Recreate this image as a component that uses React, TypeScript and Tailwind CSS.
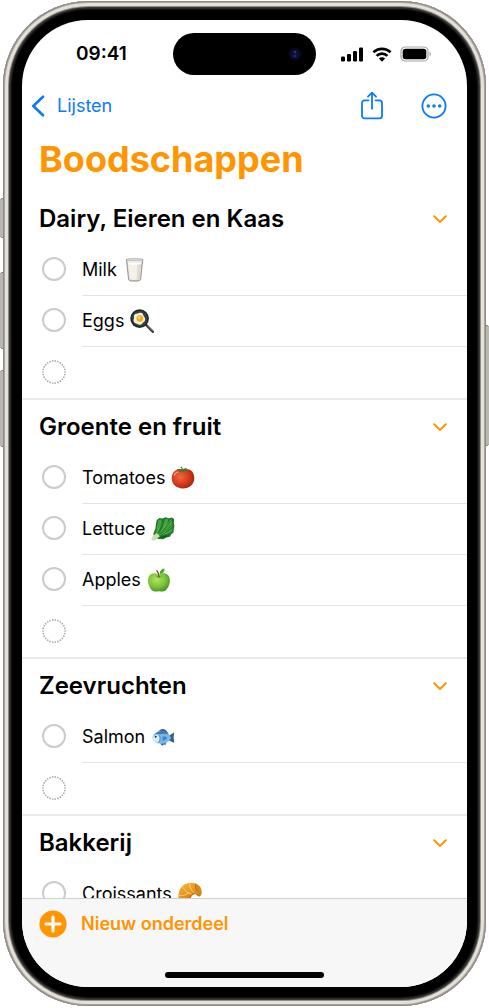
import { useState } from 'react'
import type { ReactNode } from 'react'

interface Item {
    name: string
    icon: ReactNode
}

interface Section {
    title: string
    items: Item[]
}

function MilkIcon() {
    return (
        <svg viewBox="0 0 24 24" className="size-6" aria-hidden="true">
            <path d="M3.4 1.2h16.4l-2.2 20.6c-.1.9-1.6 1.5-6 1.5s-5.9-.6-6-1.5z" fill="#c9cac9" />
            <path d="M4.4 2h14.4l-.4 4H4.8z" fill="#eceeee" />
            <path d="M4.9 5.6h13.4l-1.6 15.2c-.1.7-1.5 1.1-5.1 1.1s-5-.4-5.1-1.1z" fill="#f4f1e9" />
            <path d="M14.5 6h3.7l-1.5 14.8c-.1.5-1 .9-3 1z" fill="#dedbd2" />
            <ellipse cx="11.6" cy="5.8" rx="6.6" ry="1" fill="#fffdf6" />
            <path d="M3.4 1.4l2.2 20.2c.2 1 1.9 1.5 6 1.5s5.8-.5 6-1.5l2.2-20.2" fill="none" stroke="#85878a" strokeWidth=".8" />
            <ellipse cx="11.6" cy="1.5" rx="8.2" ry=".9" fill="#e2e4e5" stroke="#999b9d" strokeWidth=".6" />
        </svg>
    )
}

function EggsIcon() {
    return (
        <svg viewBox="0 0 24 24" className="size-6" aria-hidden="true">
            <path d="M16.3 16.2l6.5 6.5" stroke="#3a3a3c" strokeWidth="2.6" strokeLinecap="round" />
            <path d="M17.6 16.8l5 5" stroke="#8b8b8d" strokeWidth=".8" strokeLinecap="round" />
            <circle cx="9.6" cy="9.6" r="9.3" fill="#1d2421" />
            <circle cx="9.6" cy="9.6" r="7.9" fill="#37423c" />
            <path d="M4.2 6.1c1.4-1.7 3-1 4.8-2 2-1 3.7 0 4.2 1.8.4 1.5 2 2.2 2 4.4 0 2.4-1.9 2.8-2.9 4.1-1.2 1.5-3.4 1.6-5 .5-1.5-1-3.4-.9-3.7-3-.2-1.7.8-2.500.4-3.700-.2-.8-.2-1.600.2-2.100z" fill="#f2efe4" />
            <circle cx="9.8" cy="9.5" r="3.3" fill="#f7a712" />
            <circle cx="9.2" cy="8.7" r="1.6" fill="#ffd24b" />
        </svg>
    )
}

function TomatoIcon() {
    return (
        <svg viewBox="0 0 24 24" className="size-6" aria-hidden="true">
            <defs>
                <radialGradient id="tomato" cx=".38" cy=".4" r=".65">
                    <stop offset="0" stopColor="#f06a3f" />
                    <stop offset=".55" stopColor="#d83d1e" />
                    <stop offset="1" stopColor="#a82410" />
                </radialGradient>
            </defs>
            <path d="M11.7 3.400c6.700-1.400 11.600 1.900 11.600 8.600 0 6.300-4.600 10.400-11.400 10.400C5.200 22.400.7 18.300.7 12.300.7 5.600 5.500 2.500 11.700 3.400z" fill="url(#tomato)" />
            <path d="M3.300 9.300c.8-2.100 2.300-3.200 4.300-3.500" stroke="#f9a58a" strokeWidth="1.1" fill="none" strokeLinecap="round" />
            <path d="M11.3 3.8L9.400.9l.9-.3 1.800 2.400c1.500-.8 3-.9 4.300-.5l-2.200 1.300c1.500.2 2.700.7 3.600 1.600-1.700.2-3.200-.1-4.600-.7l.7 2.400c-1.300-.4-2-1.100-2.400-2.100-1.400 1-3 1.300-4.700.9 1-.4 1.700-1 2.300-1.600-1.400.1-2.600-.2-3.700-.9 2.300-.6 4.100-.5 5.900.4z" fill="#3d7b22" />
        </svg>
    )
}

function LettuceIcon() {
    return (
        <svg viewBox="0 0 24 24" className="size-6" aria-hidden="true">
            <path d="M5.800 2.900L8.500.9l3 .5L14.600.3l3 1 3.500-.8 2 1.500-.2 4 .5 3-.6 3.300-.3 3.200-2.400 2-1.200 2.200-3.500.8-3.100 1.800-5.600-.3-3.600-1.700-.7-3.600 2.100-5.800.4-3.800z" fill="#207a2b" />
            <path d="M7.500 3l2.400-.8 1 3-1.600 5.200-3.900 6 .3-5.100zM14 2l3.600.3-2.200 6-5.900 8 2.800-8.200zM21 3.500l.3 4-4.800 4.200-6 5 5.600-7.400zM21.700 11l-.9 3.900-4.300 1.800-6 1.700 5.700-3.700z" fill="#45a342" />
            <path d="M20.500 2.300l-8 9.200-7.700 8.700M8.400 10.900l-3.900 8M21.700 9.100l-8.700 6.500-7.500 4" stroke="#8bcf71" strokeWidth=".55" fill="none" />
            <path d="M18.600 18.200l-5.100 2.300-6.200.1 4.200-1.500z" fill="#10571e" />
            <path d="M5.300 15.900L2.100 19 .3 21.700l1.500 1.900 2.900-.5 4-3.500-1.400-2z" fill="#c9dfa2" />
            <circle cx="1.900" cy="22.100" r="1.300" fill="#e0d9b4" />
        </svg>
    )
}

function AppleIcon() {
    return (
        <svg viewBox="0 0 24 24" className="size-6" aria-hidden="true">
            <defs>
                <radialGradient id="apple" cx=".4" cy=".35" r=".7">
                    <stop offset="0" stopColor="#b4e45f" />
                    <stop offset=".6" stopColor="#78c137" />
                    <stop offset="1" stopColor="#438f1e" />
                </radialGradient>
            </defs>
            <path d="M11.900 6.700c2-1.200 4-1.600 6-1.200 3.200.6 5 3.300 5 6.900 0 4-2.200 8.400-4.800 10.400-2 1.400-3.900.3-6.200.4-2.200 0-4.200 1.100-6.200-.4-2.600-2-4.700-6.600-4.700-10.400 0-3.600 1.800-6.300 5-6.900 2-.4 4 0 5.900 1.200z" fill="url(#apple)" />
            <path d="M8.300 7.600c2.500 1 4.800 1 7.200.1-1 1.500-2.200 2-3.600 2s-2.600-.5-3.600-2.100z" fill="#559f27" opacity=".65" />
            <path d="M11.900 8.700c0-2.500-.6-4.400-2-6.100" stroke="#5f432f" strokeWidth="1.200" fill="none" strokeLinecap="round" />
            <path d="M12.600 5.900c0-3.200 1.800-5.200 4.800-5.500.4 3.200-1.300 5.200-4.800 5.500z" fill="#4fa429" />
        </svg>
    )
}

function FishIcon() {
    return (
        <svg viewBox="0 0 24 24" className="size-6" aria-hidden="true">
            <path d="M8 5.800c2-2 4.300-2.200 6.600-.9l3 3.600zM9 18.400l2.400 2.400 1.500-1.600 1.400 1 .9-3z" fill="#355f8d" />
            <path d="M16.800 11.200c2.200-.7 3.800-2.600 6-3.700.5 2-.1 3.700-.2 5.100.1 1.700.8 3.500.5 5.200-2.600-.8-4.300-2.200-6.300-2.700z" fill="#315f96" />
            <path d="M1.200 12.800C3 8.200 7.300 5.500 11.500 5.900c3.700.3 6.200 3.200 8.700 7-2.800 3.900-5.700 6-10.300 5.900-4.200-.1-7.400-2.300-8.700-6z" fill="#75b9e9" />
            <path d="M4.400 8.800c3.700-3.700 9.300-4.200 13.700.9-4.900-2.100-9-.1-13.700-.9z" fill="#3f77af" />
            <path d="M1.200 12.800C2.400 11 4.900 9.300 7 9.900c2.700 2.500 1.600 5.700-.4 7.500-2.500-.7-4.300-2-5.400-4.600z" fill="#deedf5" />
            <path d="M11 11.800c2.300-.8 4.400-.2 5 .9-.9 1.900-2.500 3-4.700 3 .8-1.500.8-2.600-.3-3.900z" fill="#4285c0" />
            <path d="M8 10c1.700 2.500 1.400 5-.3 7.300" stroke="#4587bc" strokeWidth=".7" fill="none" />
            <circle cx="4.700" cy="11.700" r="1" fill="#222e39" />
        </svg>
    )
}

function CroissantIcon() {
    return (
        <svg viewBox="0 0 24 24" className="size-6" aria-hidden="true">
            <defs>
                <linearGradient id="croissant" x1="0" y1="0" x2=".5" y2="1">
                    <stop offset="0" stopColor="#f5b637" />
                    <stop offset=".6" stopColor="#e39420" />
                    <stop offset="1" stopColor="#b96c13" />
                </linearGradient>
            </defs>
            <path d="M1.200 20.600C-.4 14.200.2 7.800 5 3.600 9.800-.3 17.700-.1 21.500 4.200c2.700 3.100 3 7.400.7 10-1.700.9-3.300-.9-4.600-2.300-2.400.2-4.100 1.700-4.800 4.100-1.700 5-8.100 7.300-11.600 4.600z" fill="url(#croissant)" />
            <path d="M17.600 1.700c2.900.9 4.800 3 5.500 5.500l-2.500 3c-2.500-2.200-3.400-5-3-8.500z" fill="#d88a1d" />
            <path d="M.9 13.600c4.300.6 7.700-.9 10-3.500M4.700 5.300c2.300 3.600 4.900 5.700 8.800 7M11.500 1.300c.1 3.900 1.500 7.300 4.800 9.700" stroke="#fbd678" strokeWidth=".9" fill="none" />
            <path d="M17.500 1.900c-.5 3.200.5 5.900 2.900 8.300M1.300 20.300c4.800 1.400 9.200-.8 10.800-5.300.8-2.200 2.500-3.400 4.900-3.600" stroke="#a25f14" strokeWidth=".7" fill="none" />
        </svg>
    )
}

const SECTIONS: Section[] = [
    {
        title: 'Dairy, Eieren en Kaas',
        items: [
            { name: 'Milk', icon: <MilkIcon /> },
            { name: 'Eggs', icon: <EggsIcon /> },
        ],
    },
    {
        title: 'Groente en fruit',
        items: [
            { name: 'Tomatoes', icon: <TomatoIcon /> },
            { name: 'Lettuce', icon: <LettuceIcon /> },
            { name: 'Apples', icon: <AppleIcon /> },
        ],
    },
    {
        title: 'Zeevruchten',
        items: [{ name: 'Salmon', icon: <FishIcon /> }],
    },
    {
        title: 'Bakkerij',
        items: [{ name: 'Croissants', icon: <CroissantIcon /> }],
    },
]

function StatusBar() {
    return (
        <div className="grid grid-cols-[1fr_143px_1fr] items-center pt-[13px]">
            <time className="pl-2 text-center text-[19px] leading-6 font-semibold">09:41</time>
            <div className="flex h-[42px] items-center justify-end rounded-full bg-black pr-[14px]">
                <svg viewBox="0 0 14 14" className="size-[14px]" aria-hidden="true">
                    <circle cx="7" cy="7" r="6.5" fill="#0a0a18" />
                    <circle cx="7" cy="7" r="4.5" fill="#0d0f2c" />
                    <circle cx="7" cy="5" r="1.3" fill="#25357a" />
                    <circle cx="7" cy="9" r="1.5" fill="#1d2383" />
                </svg>
            </div>
            <div className="flex items-center justify-center gap-2 pr-3">
                <svg viewBox="0 0 24 15" className="h-[15px] w-6" aria-hidden="true">
                    <rect x="1" y="9.5" width="4" height="5" rx="1.2" />
                    <rect x="7" y="7" width="4" height="7.5" rx="1.2" />
                    <rect x="13" y="4" width="4" height="10.5" rx="1.2" />
                    <rect x="19" y=".5" width="4" height="14" rx="1.2" />
                </svg>
                <svg viewBox="0 0 20 15" className="h-[15px] w-5" aria-hidden="true">
                    <path d="M1.400 5.300a12.300 12.300 0 0 1 17.200 0" stroke="#000" strokeWidth="2.7" fill="none" />
                    <path d="M4.600 8.900a7.700 7.700 0 0 1 10.800 0" stroke="#000" strokeWidth="2.7" fill="none" />
                    <path d="M10 14.700l-3.100-3.100a4.400 4.400 0 0 1 6.200 0z" />
                </svg>
                <svg viewBox="0 0 32 16" className="h-4 w-8" aria-hidden="true">
                    <rect x="1" y="1" width="27" height="14" rx="4.3" fill="none" stroke="#a6a6a6" strokeWidth="1.2" />
                    <rect x="2.7" y="2.7" width="23.6" height="10.6" rx="2.8" />
                    <path d="M29.500 5.600c1.900.7 1.900 4.100 0 4.800z" fill="#a6a6a6" />
                </svg>
            </div>
        </div>
    )
}

function NavBar() {
    return (
        <nav className="flex items-center justify-between pt-4 pr-5 pl-[9px] text-[#0a7aff]">
            <a href="#lijsten" className="flex items-center gap-3 text-[18px] leading-6">
                <svg viewBox="0 0 14 22" className="h-[22px] w-[14px]" fill="none" stroke="currentColor" strokeWidth="2.6" strokeLinecap="round" strokeLinejoin="round" aria-hidden="true">
                    <path d="M12 1.700L2.300 11l9.700 9.300" />
                </svg>
                Lijsten
            </a>
            <div className="flex items-center gap-[37px]">
                <button type="button" aria-label="Deel">
                    <svg viewBox="0 0 24 30" className="h-[30px] w-6" fill="none" stroke="currentColor" strokeWidth="1.8" strokeLinecap="round" strokeLinejoin="round" aria-hidden="true">
                        <path d="M8.500 9.300H4.600a2.600 2.600 0 0 0-2.600 2.600v12.800a2.600 2.600 0 0 0 2.600 2.600h14.800a2.600 2.600 0 0 0 2.600-2.600V11.900a2.600 2.600 0 0 0-2.600-2.600h-3.900" />
                        <path d="M12 17.800V1.900M8 5.700l4-4 4 4" />
                    </svg>
                </button>
                <button type="button" aria-label="Meer">
                    <svg viewBox="0 0 26 26" className="size-[26px]" fill="currentColor" aria-hidden="true">
                        <circle cx="13" cy="13" r="11.6" fill="none" stroke="currentColor" strokeWidth="1.8" />
                        <circle cx="7.3" cy="13" r="1.8" />
                        <circle cx="13" cy="13" r="1.8" />
                        <circle cx="18.7" cy="13" r="1.8" />
                    </svg>
                </button>
            </div>
        </nav>
    )
}

function ItemRow({ item }: { item: Item }) {
    return (
        <li className="flex h-[51px] pl-5">
            <label className="flex flex-1 items-center gap-4">
                <input
                    type="checkbox"
                    className="mb-1 size-6 shrink-0 appearance-none rounded-full border-2 border-[#cbcbcd] checked:bg-[#ff9500]"
                />
                <span className="flex h-full flex-1 items-center gap-1.5 border-b border-[#e4e4e6] pb-px text-[18px] leading-6">
                    {item.name}
                    {item.icon}
                </span>
            </label>
        </li>
    )
}

function ListSection({ section }: { section: Section }) {
    const [open, setOpen] = useState(true)

    return (
        <section className="border-b-2 border-[#ebebed]">
            <h2 className="flex h-[53px] items-center justify-between pr-5 pl-[17px] text-[24px] leading-7 font-semibold">
                {section.title}
                <button
                    type="button"
                    aria-label={`${section.title} in- of uitklappen`}
                    aria-expanded={open}
                    onClick={() => setOpen(!open)}
                    className="text-[#ff9500]"
                >
                    <svg viewBox="0 0 14 10" className="h-[10px] w-[14px]" fill="none" stroke="currentColor" strokeWidth="2" strokeLinecap="round" strokeLinejoin="round" aria-hidden="true">
                        <path d="M1.200 2.200L7 8l5.800-5.800" />
                    </svg>
                </button>
            </h2>
            {open && (
                <ul>
                    {section.items.map((item) => (
                        <ItemRow key={item.name} item={item} />
                    ))}
                    <li className="flex h-[51px] items-center pb-[2px] pl-5">
                        <button type="button" aria-label="Nieuw onderdeel">
                            <svg viewBox="0 0 24 24" className="size-6" aria-hidden="true">
                                <circle cx="12" cy="12" r="11.1" fill="none" stroke="#a9a9ab" strokeWidth="1.7" strokeLinecap="round" pathLength="26" strokeDasharray="0 1" />
                            </svg>
                        </button>
                    </li>
                </ul>
            )}
        </section>
    )
}

function Toolbar() {
    return (
        <footer className="flex h-[89px] shrink-0 flex-col justify-between border-t border-[#cfcfd1] bg-[#f7f7f7] pb-[9px]">
            <button type="button" className="flex items-center gap-[14px] self-start pt-[11px] pl-[17px] text-[18px] leading-6 font-semibold text-[#ff9500]">
                <svg viewBox="0 0 28 28" className="size-7" aria-hidden="true">
                    <circle cx="14" cy="14" r="13.6" fill="#ff9500" />
                    <path d="M14 7v14M7 14h14" stroke="#fff" strokeWidth="3.2" strokeLinecap="round" />
                </svg>
                Nieuw onderdeel
            </button>
            <div className="h-[6px] w-[159px] self-center rounded-full bg-black" />
        </footer>
    )
}

export default function App() {
    return (
        <div className="flex h-screen bg-white pt-px pb-[2px] font-[Inter,sans-serif] text-black">
            <div className="flex w-[3px] flex-col pt-[197px]">
                <div className="h-10 rounded-l-sm border-y border-[#77746e] bg-[#b9b7b1]" />
                <div className="mt-[34px] h-[77px] rounded-l-sm border-y border-[#77746e] bg-[#b9b7b1]" />
                <div className="mt-[21px] h-[77px] rounded-l-sm border-y border-[#77746e] bg-[#b9b7b1]" />
            </div>
            <div className="flex flex-1 rounded-[85px] bg-black p-[19px] shadow-[inset_0_0_0_1px_#8d8a83,inset_0_0_0_2px_#aaa7a0,inset_0_0_0_5px_#e3e1d8,inset_0_0_0_6px_#8f8c86,inset_0_0_2px_8px_#3c3b3a]">
                <main className="flex min-w-0 flex-1 flex-col overflow-hidden rounded-[66px] bg-white">
                    <StatusBar />
                    <NavBar />
                    <h1 className="pt-4 pb-[11px] pl-[17px] text-[36px] leading-11 font-bold text-[#ff9500]">
                        Boodschappen
                    </h1>
                    <div className="min-h-0 flex-1 overflow-hidden">
                        {SECTIONS.map((section) => (
                            <ListSection key={section.title} section={section} />
                        ))}
                    </div>
                    <Toolbar />
                </main>
            </div>
            <div className="w-[3px] pt-[324px]">
                <div className="h-[121px] rounded-r-sm border-y border-[#77746e] bg-[#b9b7b1]" />
            </div>
        </div>
    )
}
